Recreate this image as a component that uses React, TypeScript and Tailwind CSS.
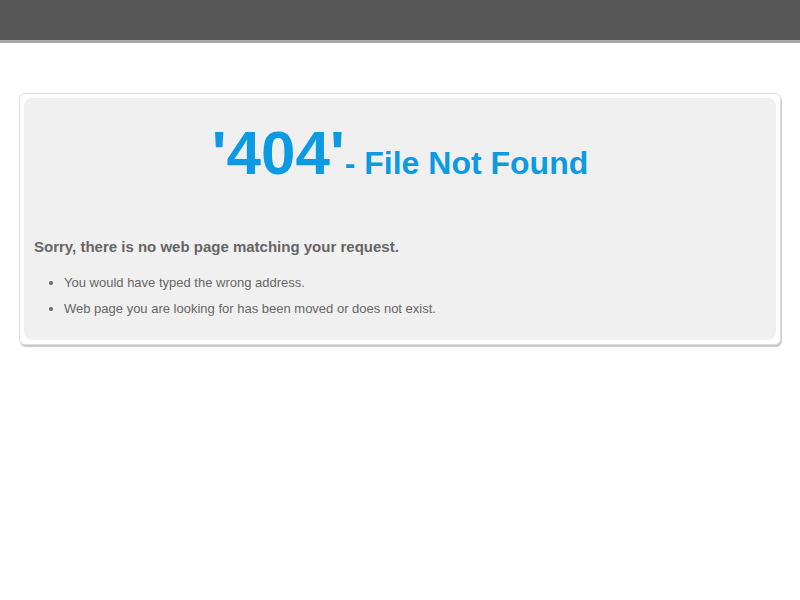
const NotFound = () => {
  const reasons = [
    "You would have typed the wrong address.",
    "Web page you are looking for has been moved or does not exist.",
  ];

  return (
    <div className="min-h-[600px] bg-white font-['Liberation_Sans',Arial,sans-serif]">
      {/* Top bar */}
      <div className="h-[43px] bg-[#575757] border-b-[3px] border-[#a9a9a9]"></div>

      {/* Box */}
      <div className="mx-[19px] mt-[50px] rounded-[6px] border border-[#dedede] bg-white p-[4px] shadow-[1px_2px_1px_#c8c8c8]">
        <div className="rounded-[8px] bg-[#f0f0f0] px-[10px] pt-[24px] pb-[18px]">
          <h1 className="h-[62px] text-center font-bold text-[#0c9be2] leading-[62px]">
            <span className="text-[62px] leading-[62px]">'404'</span>
            <span className="text-[32px] leading-[32px]">- File Not Found</span>
          </h1>

          <p className="mt-[53px] text-[15px] leading-[20px] font-bold text-[#666666]">
            Sorry, there is no web page matching your request.
          </p>

          <ul className="mt-[13px] list-disc pl-[30px] text-[13px] leading-[26px] text-[#666666]">
            {reasons.map((r) => (
              <li key={r}>{r}</li>
            ))}
          </ul>
        </div>
      </div>
    </div>
  );
};

export default function App() {
  return <NotFound />;
}
